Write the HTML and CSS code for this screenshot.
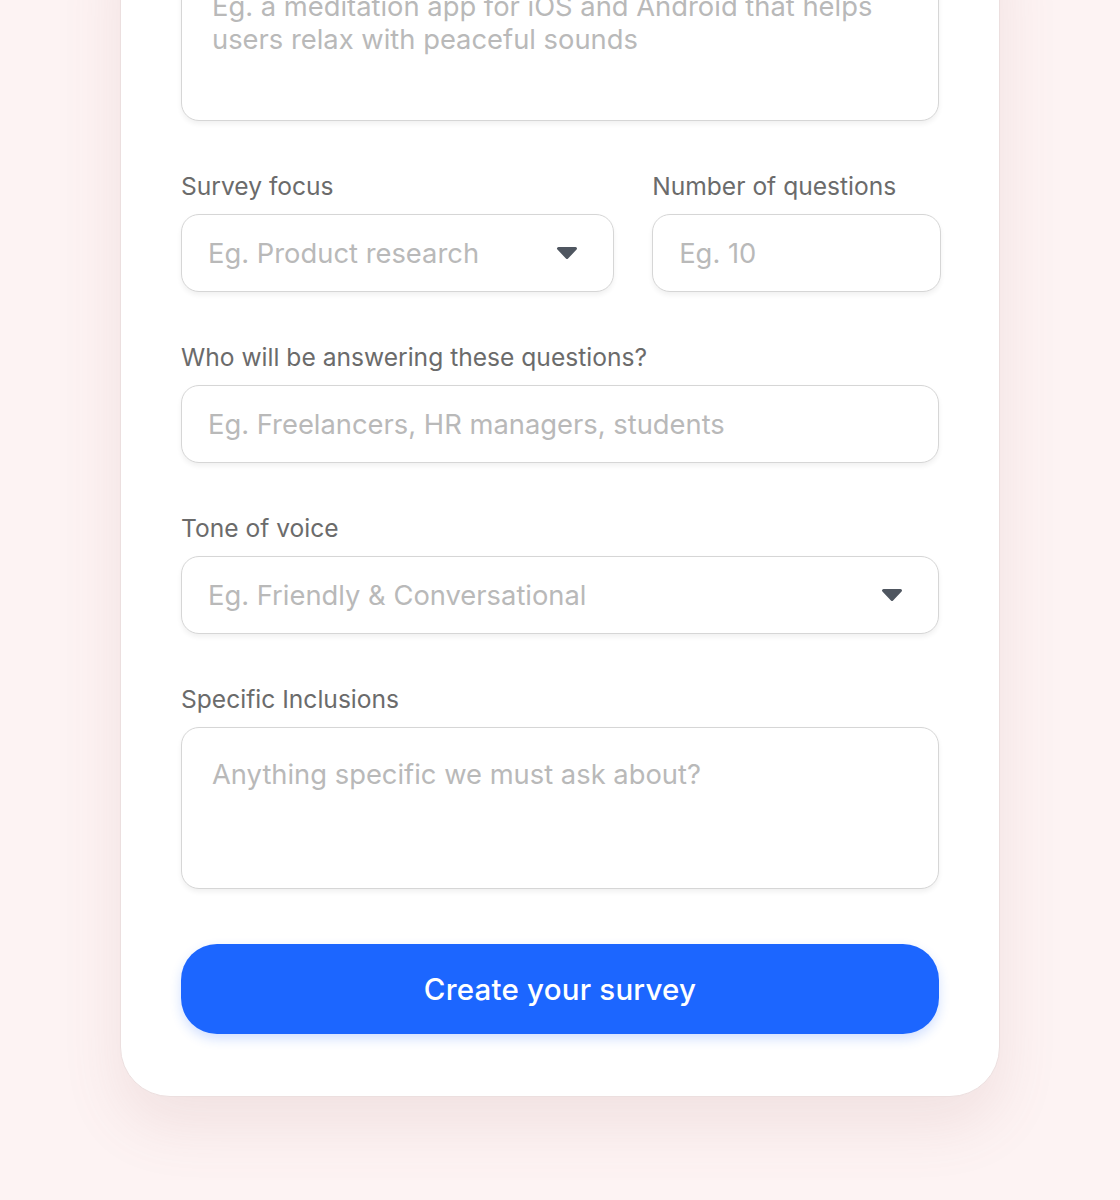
FILE: index.html
```html
<!DOCTYPE html>
<html lang="en">
<head>
    <meta charset="UTF-8">
    <meta name="viewport" content="width=device-width, initial-scale=1.0">
    <title>Create a survey</title>
    <link rel="stylesheet" href="styles.css">
</head>
<body>
    <div class="card">
        <!-- product description (top is scrolled out of view) -->
        <div class="field">
            <textarea class="box area" placeholder="Eg. a meditation app for iOS and Android that helps users relax with peaceful sounds"></textarea>
        </div>

        <div class="row">
            <div class="field">
                <label class="label">Survey focus</label>
                <div class="select">
                    <input class="box" type="text" placeholder="Eg. Product research" readonly>
                    <svg class="caret" width="22" height="14" viewBox="0 0 22 14"><polygon points="2.5,2.5 19.5,2.5 11,11.5" fill="#4f5660" stroke="#4f5660" stroke-width="3" stroke-linejoin="round"/></svg>
                </div>
            </div>
            <div class="field">
                <label class="label">Number of questions</label>
                <input class="box" type="text" placeholder="Eg. 10">
            </div>
        </div>

        <div class="field">
            <label class="label">Who will be answering these questions?</label>
            <input class="box" type="text" placeholder="Eg. Freelancers, HR managers, students">
        </div>

        <div class="field">
            <label class="label">Tone of voice</label>
            <div class="select">
                <input class="box" type="text" placeholder="Eg. Friendly &amp; Conversational" readonly>
                <svg class="caret" width="22" height="14" viewBox="0 0 22 14"><polygon points="2.5,2.5 19.5,2.5 11,11.5" fill="#4f5660" stroke="#4f5660" stroke-width="3" stroke-linejoin="round"/></svg>
            </div>
        </div>

        <div class="field">
            <label class="label">Specific Inclusions</label>
            <textarea class="box area" placeholder="Anything specific we must ask about?"></textarea>
        </div>

        <button class="btn">Create your survey</button>
    </div>
</body>
</html>
```

FILE: styles.css
```css
/* base */
body {
    margin: 0;
    padding-bottom: 140px;
    background-color: #fdf3f3;
    font-family: Inter, "Noto Sans", sans-serif;
    color: #6b6b6b;
}

/* white card, top part is above the viewport */
.card {
    width: 758px;
    margin: -100px auto 0;
    padding: 58px 60px 62px;
    background-color: #fff;
    border: 1px solid #ecdfdf;
    border-radius: 50px;
    box-shadow: 0 28px 60px rgba(160, 100, 100, 0.12);
}

.field {
    display: flex;
    flex-direction: column;
    margin-bottom: 50px;
}

.row {
    display: grid;
    grid-template-columns: 3fr 2fr;
    gap: 38px;
    margin-right: -2px;
}

.label {
    font-size: 24.6px;
    line-height: 30px;
    margin-bottom: 13px;
    color: #6b6b6b;
}

/* inputs */
.box {
    box-sizing: border-box;
    width: 100%;
    height: 78px;
    padding: 0 26px;
    font-family: inherit;
    font-size: 27.35px;
    color: #444;
    background-color: #fff;
    border: 1.5px solid #d6d6d6;
    border-radius: 18px;
    box-shadow: 0 3px 5px rgba(0, 0, 0, 0.06);
    outline: none;
}

.box::placeholder {
    color: #b9b9b9;
}

.area {
    display: block;
    height: 162px;
    padding: 30px 30px 15px;
    line-height: 33px;
    resize: none;
}

.select {
    position: relative;
}

.select .box {
    cursor: pointer;
}

.caret {
    position: absolute;
    right: 36px;
    top: 50%;
    transform: translateY(-50%);
    pointer-events: none;
}

/* submit */
.btn {
    display: block;
    width: 100%;
    height: 90px;
    margin-top: 55px;
    background-color: #1c66ff;
    color: #fff;
    border: none;
    border-radius: 36px;
    font-family: inherit;
    font-size: 29.5px;
    font-weight: 500;
    letter-spacing: 0.2px;
    cursor: pointer;
    box-shadow: 0 5px 12px rgba(28, 102, 255, 0.2);
}
```
